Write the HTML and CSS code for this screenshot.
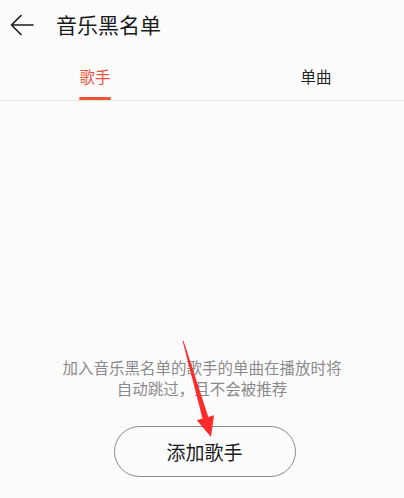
FILE: index.html
```html
<!DOCTYPE html>
<html lang="zh-CN">
<head>
<meta charset="utf-8">
<title>音乐黑名单</title>
<link rel="stylesheet" href="styles.css">
</head>
<body>
<div class="page">
  <header class="topbar">
    <svg class="back" width="24" height="22" viewBox="0 0 24 22" fill="none" stroke="#1a1a1a" stroke-width="1.6" stroke-linecap="round" stroke-linejoin="round">
      <path d="M23 11H2M11 1.5L1.5 11 11 20.5"/>
    </svg>
    <h1 class="title">音乐黑名单</h1>
  </header>
  <nav class="tabs">
    <div class="tab active">歌手</div>
    <div class="tab">单曲</div>
  </nav>
  <main class="content">
    <p class="hint">加入音乐黑名单的歌手的单曲在播放时将<br>自动跳过，且不会被推荐</p>
    <button class="add">添加歌手</button>
  </main>
  <svg class="annot" width="404" height="498" viewBox="0 0 404 498">
    <polygon fill="#ff2b2b" points="182.6,341 183.6,341 208.3,417 214,415.3 211,437 196.8,420.3 202.5,418.6"/>
  </svg>
</div>
</body>
</html>
```
FILE: styles.css
```css
html, body {
  margin: 0;
  padding: 0;
  background: #fdfcfd;
}
.page {
  position: relative;
  width: 404px;
  height: 498px;
  overflow: hidden;
  font-family: "Noto Sans CJK SC", "Noto Sans", sans-serif;
}
.topbar {
  height: 48px;
  display: flex;
  align-items: center;
  padding-left: 10px;
}
.back {
  display: block;
  margin-top: 1px;
}
.title {
  margin: 0 0 0 22px;
  font-size: 21px;
  font-weight: 400;
  color: #1a1a1a;
  line-height: 28px;
}
.tabs {
  height: 52px;
  display: flex;
  justify-content: space-between;
  padding: 0 72px 0 79px;
  border-bottom: 1px solid #e6e5e6;
}
.tab {
  position: relative;
  font-size: 15.5px;
  line-height: 22px;
  padding-top: 17px;
  color: #222;
  width: 32px;
  text-align: center;
  letter-spacing: 0;
}
.tab.active {
  color: #e9553d;
}
.tab.active::after {
  content: "";
  position: absolute;
  left: 0;
  right: 0;
  bottom: 0;
  height: 3px;
  border-radius: 2px;
  background: #ec5235;
}
.content {
  display: flex;
  flex-direction: column;
  align-items: center;
}
.hint {
  margin: 256px 0 0;
  font-size: 15.5px;
  line-height: 21px;
  color: #8a8a8a;
  text-align: center;
}
.add {
  margin-top: 27px;
  margin-left: 5px;
  width: 182px;
  height: 51px;
  border: 1px solid #8a8a8a;
  border-radius: 26px;
  background: transparent;
  font-family: inherit;
  font-size: 19px;
  color: #1a1a1a;
  padding: 0;
}
.annot {
  position: absolute;
  left: 0;
  top: 0;
  pointer-events: none;
}
```
